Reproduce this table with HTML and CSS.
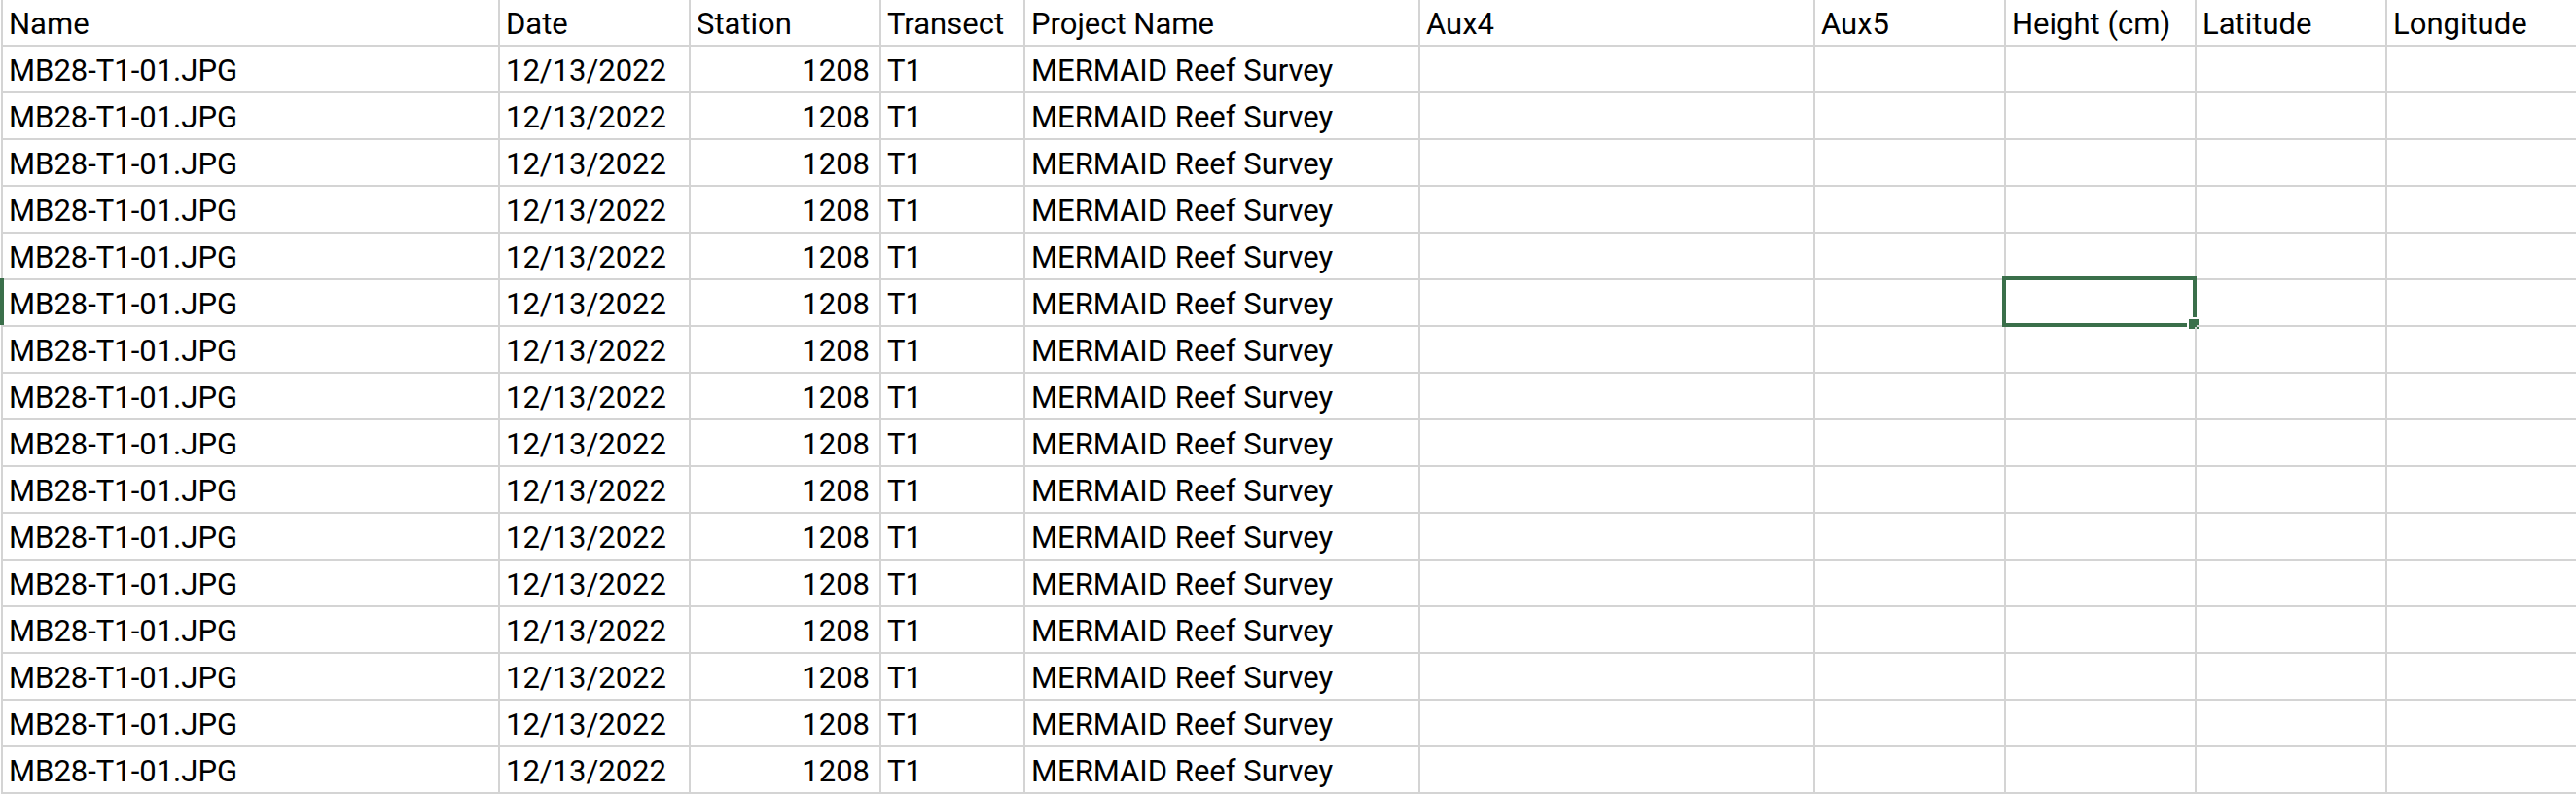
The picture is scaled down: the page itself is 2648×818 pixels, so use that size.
FILE: index.html
```html
<!DOCTYPE html>
<html lang="en">
<head>
<meta charset="utf-8">
<title>Sheet</title>
<link rel="stylesheet" href="styles.css">
</head>
<body>
<div class="sheet">
  <div class="row">
    <div class="cell">Name</div><div class="cell">Date</div><div class="cell">Station</div><div class="cell">Transect</div><div class="cell">Project Name</div><div class="cell">Aux4</div><div class="cell">Aux5</div><div class="cell">Height (cm)</div><div class="cell">Latitude</div><div class="cell">Longitude</div>
  </div>
  <div class="row"><div class="cell">MB28-T1-01.JPG</div><div class="cell">12/13/2022</div><div class="cell num">1208</div><div class="cell">T1</div><div class="cell">MERMAID Reef Survey</div><div class="cell"></div><div class="cell"></div><div class="cell"></div><div class="cell"></div><div class="cell"></div></div>
  <div class="row"><div class="cell">MB28-T1-01.JPG</div><div class="cell">12/13/2022</div><div class="cell num">1208</div><div class="cell">T1</div><div class="cell">MERMAID Reef Survey</div><div class="cell"></div><div class="cell"></div><div class="cell"></div><div class="cell"></div><div class="cell"></div></div>
  <div class="row"><div class="cell">MB28-T1-01.JPG</div><div class="cell">12/13/2022</div><div class="cell num">1208</div><div class="cell">T1</div><div class="cell">MERMAID Reef Survey</div><div class="cell"></div><div class="cell"></div><div class="cell"></div><div class="cell"></div><div class="cell"></div></div>
  <div class="row"><div class="cell">MB28-T1-01.JPG</div><div class="cell">12/13/2022</div><div class="cell num">1208</div><div class="cell">T1</div><div class="cell">MERMAID Reef Survey</div><div class="cell"></div><div class="cell"></div><div class="cell"></div><div class="cell"></div><div class="cell"></div></div>
  <div class="row"><div class="cell">MB28-T1-01.JPG</div><div class="cell">12/13/2022</div><div class="cell num">1208</div><div class="cell">T1</div><div class="cell">MERMAID Reef Survey</div><div class="cell"></div><div class="cell"></div><div class="cell"></div><div class="cell"></div><div class="cell"></div></div>
  <div class="row"><div class="cell row-active">MB28-T1-01.JPG</div><div class="cell">12/13/2022</div><div class="cell num">1208</div><div class="cell">T1</div><div class="cell">MERMAID Reef Survey</div><div class="cell"></div><div class="cell"></div><div class="cell selected"><span class="sel-box"></span><span class="fill-handle"></span></div><div class="cell"></div><div class="cell"></div></div>
  <div class="row"><div class="cell">MB28-T1-01.JPG</div><div class="cell">12/13/2022</div><div class="cell num">1208</div><div class="cell">T1</div><div class="cell">MERMAID Reef Survey</div><div class="cell"></div><div class="cell"></div><div class="cell"></div><div class="cell"></div><div class="cell"></div></div>
  <div class="row"><div class="cell">MB28-T1-01.JPG</div><div class="cell">12/13/2022</div><div class="cell num">1208</div><div class="cell">T1</div><div class="cell">MERMAID Reef Survey</div><div class="cell"></div><div class="cell"></div><div class="cell"></div><div class="cell"></div><div class="cell"></div></div>
  <div class="row"><div class="cell">MB28-T1-01.JPG</div><div class="cell">12/13/2022</div><div class="cell num">1208</div><div class="cell">T1</div><div class="cell">MERMAID Reef Survey</div><div class="cell"></div><div class="cell"></div><div class="cell"></div><div class="cell"></div><div class="cell"></div></div>
  <div class="row"><div class="cell">MB28-T1-01.JPG</div><div class="cell">12/13/2022</div><div class="cell num">1208</div><div class="cell">T1</div><div class="cell">MERMAID Reef Survey</div><div class="cell"></div><div class="cell"></div><div class="cell"></div><div class="cell"></div><div class="cell"></div></div>
  <div class="row"><div class="cell">MB28-T1-01.JPG</div><div class="cell">12/13/2022</div><div class="cell num">1208</div><div class="cell">T1</div><div class="cell">MERMAID Reef Survey</div><div class="cell"></div><div class="cell"></div><div class="cell"></div><div class="cell"></div><div class="cell"></div></div>
  <div class="row"><div class="cell">MB28-T1-01.JPG</div><div class="cell">12/13/2022</div><div class="cell num">1208</div><div class="cell">T1</div><div class="cell">MERMAID Reef Survey</div><div class="cell"></div><div class="cell"></div><div class="cell"></div><div class="cell"></div><div class="cell"></div></div>
  <div class="row"><div class="cell">MB28-T1-01.JPG</div><div class="cell">12/13/2022</div><div class="cell num">1208</div><div class="cell">T1</div><div class="cell">MERMAID Reef Survey</div><div class="cell"></div><div class="cell"></div><div class="cell"></div><div class="cell"></div><div class="cell"></div></div>
  <div class="row"><div class="cell">MB28-T1-01.JPG</div><div class="cell">12/13/2022</div><div class="cell num">1208</div><div class="cell">T1</div><div class="cell">MERMAID Reef Survey</div><div class="cell"></div><div class="cell"></div><div class="cell"></div><div class="cell"></div><div class="cell"></div></div>
  <div class="row"><div class="cell">MB28-T1-01.JPG</div><div class="cell">12/13/2022</div><div class="cell num">1208</div><div class="cell">T1</div><div class="cell">MERMAID Reef Survey</div><div class="cell"></div><div class="cell"></div><div class="cell"></div><div class="cell"></div><div class="cell"></div></div>
  <div class="row"><div class="cell">MB28-T1-01.JPG</div><div class="cell">12/13/2022</div><div class="cell num">1208</div><div class="cell">T1</div><div class="cell">MERMAID Reef Survey</div><div class="cell"></div><div class="cell"></div><div class="cell"></div><div class="cell"></div><div class="cell"></div></div>
</div>
</body>
</html>
```
FILE: styles.css
```css
html, body {
  margin: 0;
  padding: 0;
  background: #ffffff;
}

body {
  width: 2648px;
  height: 818px;
  overflow: hidden;
  font-family: Roboto, "Liberation Sans", sans-serif;
  font-size: 31px;
  color: #000000;
}

.sheet {
  margin-left: 1px;
  border-left: 2px solid #d4d4d4;
  display: flex;
  flex-direction: column;
}

.row {
  display: grid;
  grid-template-columns: 511px 196px 196px 148px 406px 406px 196px 196px 196px 196px;
  height: 48px;
}

.cell {
  position: relative;
  box-sizing: border-box;
  height: 48px;
  border-right: 2px solid #d4d4d4;
  border-bottom: 2px solid #d4d4d4;
  padding: 4px 10px 0 6px;
  line-height: 42px;
  white-space: nowrap;
  overflow: visible;
}

.num {
  text-align: right;
}

.row-active::before {
  content: "";
  position: absolute;
  left: -3px;
  top: -2px;
  width: 4px;
  height: 48px;
  background: #3a6f4a;
}

.sel-box {
  position: absolute;
  left: -4px;
  top: -4px;
  right: -2px;
  bottom: -2px;
  border: 4px solid #3a6f4a;
  box-sizing: border-box;
}

.fill-handle {
  position: absolute;
  right: -4px;
  bottom: -4px;
  width: 10px;
  height: 10px;
  background: #3a6f4a;
  box-shadow: -2px -2px 0 0 #ffffff;
}
```
